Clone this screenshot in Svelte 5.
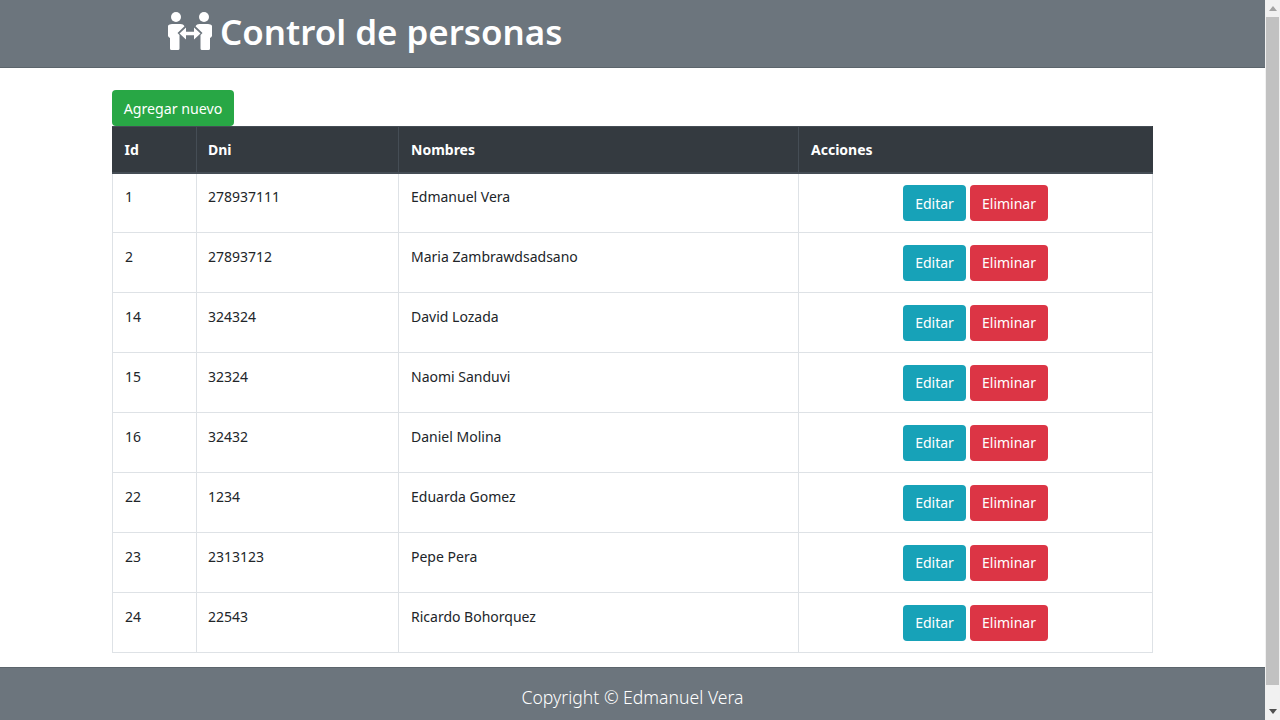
<script>
  const personas = [
    { id: 1, dni: "278937111", nombre: "Edmanuel Vera" },
    { id: 2, dni: "27893712", nombre: "Maria Zambrawdsadsano" },
    { id: 14, dni: "324324", nombre: "David Lozada" },
    { id: 15, dni: "32324", nombre: "Naomi Sanduvi" },
    { id: 16, dni: "32432", nombre: "Daniel Molina" },
    { id: 22, dni: "1234", nombre: "Eduarda Gomez" },
    { id: 23, dni: "2313123", nombre: "Pepe Pera" },
    { id: 24, dni: "22543", nombre: "Ricardo Bohorquez" }
  ];
</script>

<div class="window">
  <div class="page">
    <header>
      <svg class="logo" viewBox="0 0 44 38" width="44" height="38" aria-hidden="true">
        <circle cx="8" cy="5" r="5" />
        <circle cx="36" cy="5" r="5" />
        <path d="M4.500 12h8c2 0 3 .8 4 2.300l-7 6.700 2 2v13.500a1.500 1.500 0 0 1-1.500 1.500h-6.500a1.500 1.500 0 0 1-1.500-1.500v-10.500c-1.500-.8-2.500-2.300-2.500-4.500v-6c0-2 2-3.500 4.500-3.500z" />
        <path d="M39.500 12h-8c-2 0-3 .8-4 2.300l7 6.700-2 2v13.500a1.500 1.500 0 0 0 1.500 1.500h6.500a1.500 1.500 0 0 0 1.500-1.500v-10.500c1.500-.8 2.500-2.300 2.500-4.500v-6c0-2-2-3.500-4.500-3.500z" />
        <path d="M11.500 21.500l6.500-6v4.300h8v-4.300l6.500 6-6.500 6v-4.300h-8v4.300z" />
      </svg>
      <h1>Control de personas</h1>
    </header>

    <main>
      <button class="btn add">Agregar nuevo</button>
      <table>
        <colgroup>
          <col class="c-id" />
          <col class="c-dni" />
          <col class="c-nom" />
          <col />
        </colgroup>
        <thead>
          <tr>
            <th>Id</th>
            <th>Dni</th>
            <th>Nombres</th>
            <th>Acciones</th>
          </tr>
        </thead>
        <tbody>
          {#each personas as p}
            <tr>
              <td>{p.id}</td>
              <td>{p.dni}</td>
              <td>{p.nombre}</td>
              <td class="acciones">
                <div class="grupo">
                  <button class="btn edit">Editar</button>
                  <button class="btn del">Eliminar</button>
                </div>
              </td>
            </tr>
          {/each}
        </tbody>
      </table>
    </main>

    <footer>Copyright © Edmanuel Vera</footer>
  </div>

  <div class="scrollbar">
    <div class="arrow up"></div>
    <div class="thumb"></div>
    <div class="arrow down"></div>
  </div>
</div>

<style>
  :global(body) {
    margin: 0;
    background: #fff;
    overflow: hidden;
    font-family: "Noto Sans", "Open Sans", sans-serif;
    color: #212529;
  }

  .window {
    display: flex;
    height: 720px;
    overflow: hidden;
  }

  .page {
    flex: 1;
    min-width: 0;
    display: flex;
    flex-direction: column;
  }

  header {
    height: 68px;
    box-sizing: border-box;
    background: #6c757d;
    border-bottom: 1px solid #5c656c;
    padding-left: 168px;
    display: flex;
    align-items: center;
    gap: 8px;
    color: #fff;
  }

  .logo {
    fill: #fff;
    margin-bottom: 6px;
  }

  h1 {
    margin: 0 0 4px;
    font-size: 34.9px;
    font-weight: 600;
    line-height: 1.2;
  }

  main {
    padding: 22px 112px 0 112px;
    flex: 1;
  }

  .btn {
    font: inherit;
    font-size: 14px;
    line-height: 21px;
    height: 36px;
    padding: 0;
    border: none;
    border-radius: 4px;
    color: #fff;
  }

  .add {
    display: block;
    width: 122px;
    background: #28a745;
    font-size: 14.2px;
  }

  table {
    width: 1041px;
    table-layout: fixed;
    border-collapse: collapse;
    font-size: 14px;
    line-height: 21px;
  }

  .c-id {
    width: 84px;
  }

  .c-dni {
    width: 202px;
  }

  .c-nom {
    width: 400px;
  }

  th {
    background: #343a40;
    color: #fff;
    border: 1px solid #454d55;
    border-bottom-width: 2px;
    height: 46px;
    box-sizing: border-box;
    padding: 0 12px;
    text-align: left;
    font-weight: 700;
  }

  th:first-child {
    border-left-color: #343a40;
    padding-left: 11.500px;
  }

  th:last-child {
    border-right-color: #343a40;
  }

  th:nth-child(2),
  td:nth-child(2) {
    padding-left: 11px;
  }

  td {
    border: 1px solid #dee2e6;
    height: 60px;
    box-sizing: border-box;
    padding: 12.500px 12px 12px;
    vertical-align: top;
  }

  .acciones {
    padding: 11.500px 12px 0;
  }

  .grupo {
    display: flex;
    justify-content: center;
    gap: 4px;
  }

  .edit {
    width: 63px;
    background: #17a2b8;
  }

  .del {
    width: 78px;
    background: #dc3545;
  }

  footer {
    height: 53px;
    flex: none;
    box-sizing: border-box;
    background: #6c757d;
    border-top: 1px solid #5c656c;
    color: #fff;
    font-size: 17.6px;
    font-weight: 300;
    text-align: center;
    padding-top: 17px;
  }

  .scrollbar {
    width: 15px;
    flex: none;
    background: #f1f1f1;
    display: flex;
    flex-direction: column;
  }

  .thumb {
    flex: 1;
    margin: 0 1px;
    background: #c1c1c1;
  }

  .arrow {
    display: flex;
    justify-content: center;
    box-sizing: border-box;
  }

  .arrow.up {
    height: 17px;
    padding-top: 6px;
    align-items: flex-start;
  }

  .arrow.down {
    height: 35px;
    padding-bottom: 6px;
    align-items: flex-end;
  }

  .arrow.up::after {
    content: "";
    border: 4px solid transparent;
    border-top: 0;
    border-bottom: 5px solid #a3a3a3;
  }

  .arrow.down::after {
    content: "";
    border: 4px solid transparent;
    border-bottom: 0;
    border-top: 5px solid #505050;
  }
</style>
